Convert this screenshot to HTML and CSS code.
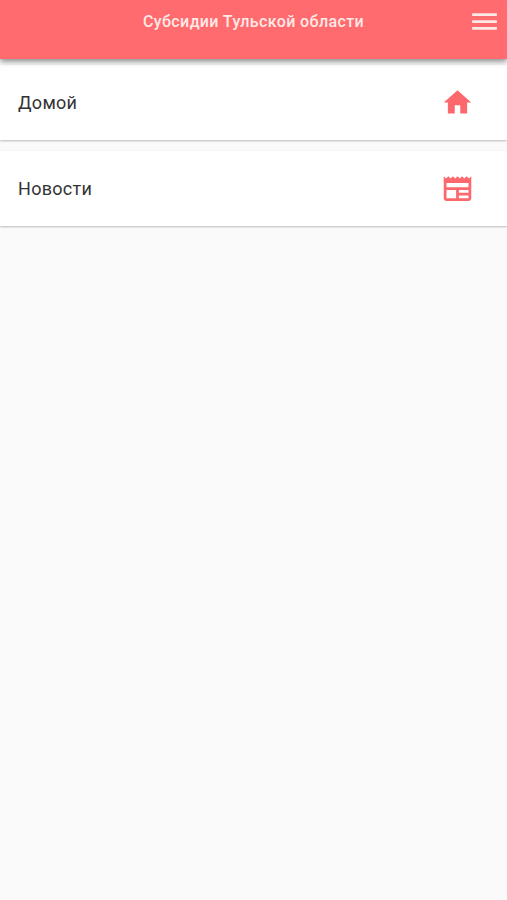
FILE: index.html
```html
<!DOCTYPE html>
<html lang="ru">
<head>
  <meta charset="UTF-8">
  <meta name="viewport" content="width=device-width, initial-scale=1.0">
  <title>Субсидии Тульской области</title>
  <link rel="stylesheet" href="styles.css">
</head>
<body>
  <header class="app-bar">
    <h1>Субсидии Тульской области</h1>
    <button type="button" class="menu-button" aria-label="Меню">
      <svg class="icon" viewBox="0 0 24 24"><path d="M3 18h18v-2H3v2zm0-5h18v-2H3v2zm0-7v2h18V6H3z"/></svg>
    </button>
  </header>

  <main class="menu-list">
    <a class="menu-item" href="#">
      <span>Домой</span>
      <svg class="icon" viewBox="0 0 24 24"><path d="M10 20v-6h4v6h5v-8h3L12 3 2 12h3v8z"/></svg>
    </a>
    <a class="menu-item" href="#">
      <span>Новости</span>
      <svg class="icon" viewBox="0 0 24 24"><path d="M22 3l-1.67 1.67L18.67 3 17 4.67 15.33 3l-1.66 1.67L12 3l-1.67 1.67L8.67 3 7 4.67 5.33 3 3.67 4.67 2 3v16c0 1.1.9 2 2 2h16c1.1 0 2-.9 2-2V3zM11 19H4v-6h7v6zm9 0h-7v-2h7v2zm0-4h-7v-2h7v2zm0-4H4V8h16v3z"/></svg>
    </a>
  </main>
</body>
</html>
```
FILE: styles.css
```css
body {
  font-family: Roboto, "Liberation Sans", sans-serif;
  background-color: #fafafa;
  margin: 0;
  min-height: 100vh;
}

.app-bar {
  display: grid;
  grid-template-columns: 1fr auto 1fr;
  align-items: center;
  height: 59px;
  padding: 0 6px 16px;
  box-sizing: border-box;
  background-color: #ff6b6e;
  color: #ffe9e6;
  box-shadow: 0 2px 6px rgba(0, 0, 0, 0.5);
  position: relative; /* keeps the shadow above the list */
}

h1 {
  grid-column: 2;
  margin: 0;
  font-size: 16px;
  font-weight: 500;
  line-height: 20px;
  letter-spacing: 0.38px;
}

.menu-button {
  justify-self: end;
  padding: 0;
  border: none;
  background: none;
  color: inherit;
  cursor: pointer;
}

.icon {
  display: block;
  width: 33px;
  height: 33px;
  fill: currentColor;
}

.menu-list {
  display: flex;
  flex-direction: column;
  gap: 11px;
  padding-top: 6px;
}

.menu-item {
  display: flex;
  align-items: center;
  justify-content: space-between;
  height: 75px;
  padding: 0 33px 0 18px;
  background-color: #fff;
  box-shadow: 0 1px 2px rgba(0, 0, 0, 0.26);
  color: #333;
  font-size: 18px;
  letter-spacing: 0.3px;
  text-decoration: none;
}

.menu-item .icon {
  color: #fc686c;
}
```
